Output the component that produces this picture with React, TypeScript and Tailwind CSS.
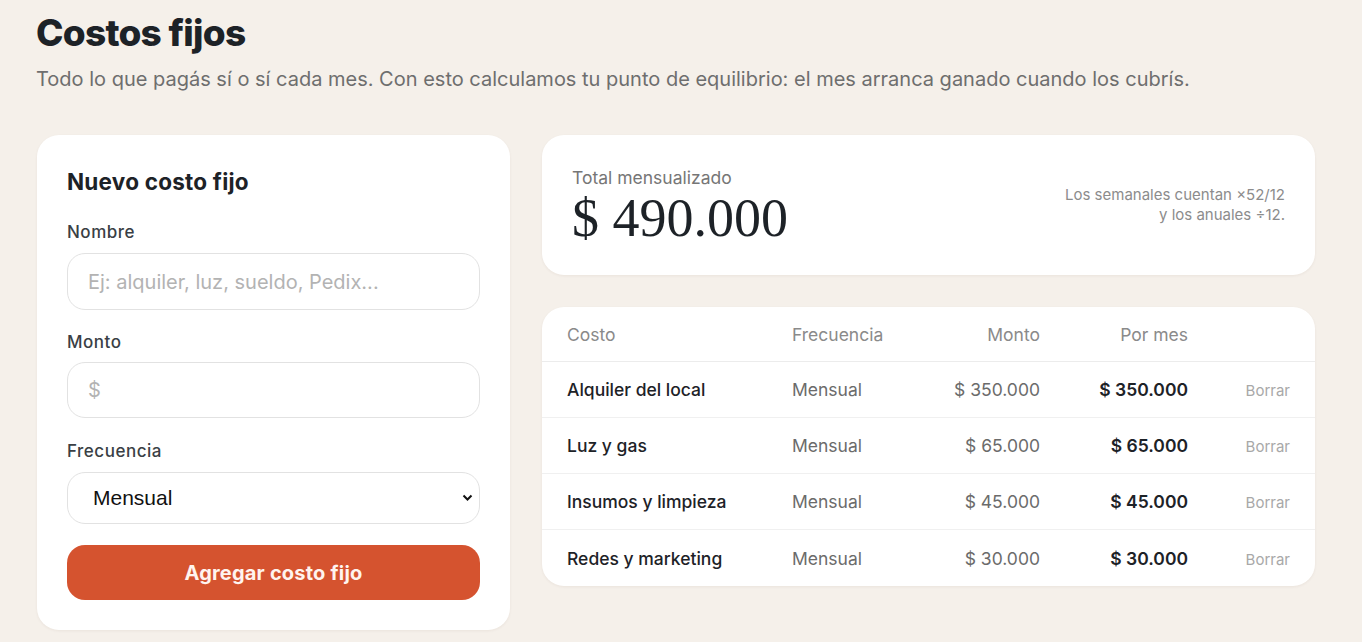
import React from 'react';

interface Cost {
  name: string;
  freq: string;
  amount: string;
  monthly: string;
}

const costs: Cost[] = [
  { name: 'Alquiler del local', freq: 'Mensual', amount: '$ 350.000', monthly: '$ 350.000' },
  { name: 'Luz y gas', freq: 'Mensual', amount: '$ 65.000', monthly: '$ 65.000' },
  { name: 'Insumos y limpieza', freq: 'Mensual', amount: '$ 45.000', monthly: '$ 45.000' },
  { name: 'Redes y marketing', freq: 'Mensual', amount: '$ 30.000', monthly: '$ 30.000' },
];

const cols = 'grid grid-cols-[225px_130px_118px_148px_1fr] items-center px-[25px]';

export default function App() {
  return (
    <main className="min-h-screen bg-[#f5f0ea] px-9 pt-[9px] pb-10 font-['Inter',sans-serif] text-[#1f2328]">
      <h1 className="text-[37px] leading-[48px] font-extrabold tracking-[-0.02em] text-[#1d2227]">Costos fijos</h1>
      <p className="mt-[8px] text-[20px] leading-[28px] text-[#6e6e6e]">
        Todo lo que pagás sí o sí cada mes. Con esto calculamos tu punto de equilibrio: el mes arranca ganado cuando los cubrís.
      </p>

      <div className="mt-[42px] ml-px grid w-[1278px] grid-cols-[473px_1fr] items-start gap-8">
        {/* Form */}
        <section className="rounded-[22px] bg-white p-[30px] shadow-[0_1px_3px_rgba(60,40,20,0.06)]">
          <h2 className="mt-[2px] text-[22.5px] leading-[30px] font-bold tracking-[0.01em] text-[#1d2227]">Nuevo costo fijo</h2>

          <label className="mt-[25px] block text-[17px] leading-[20px] font-medium tracking-[0.03em] text-[#3a3f45]">Nombre</label>
          <input
            className="mt-[11px] block h-[57px] w-full rounded-[18px] border border-[#e2e2e2] bg-white px-[20px] text-[20px] outline-none placeholder:text-[#b3b3b3]"
            placeholder="Ej: alquiler, luz, sueldo, Pedix..."
          />

          <label className="mt-[22px] block text-[17px] leading-[20px] font-medium tracking-[0.03em] text-[#3a3f45]">Monto</label>
          <input
            className="mt-[10px] block h-[56px] w-full rounded-[18px] border border-[#e2e2e2] bg-white px-[20px] text-[20px] outline-none placeholder:text-[#b3b3b3]"
            placeholder="$"
          />

          <label className="mt-[23px] block text-[17px] leading-[20px] font-medium tracking-[0.03em] text-[#3a3f45]">Frecuencia</label>
          <div className="relative mt-[11px]">
            <select className="block h-[52px] w-full appearance-none rounded-[18px] border border-[#e2e2e2] bg-white pl-[25px] font-['Liberation_Sans',sans-serif] text-[21px] text-[#111] outline-none">
              <option>Mensual</option>
              <option>Semanal</option>
              <option>Anual</option>
            </select>
            <svg className="pointer-events-none absolute right-[7px] top-[22px]" width="11" height="8" viewBox="0 0 11 8">
              <path d="M1.5 1.5 L5.5 5.5 L9.5 1.5" fill="none" stroke="#111" strokeWidth="2" />
            </svg>
          </div>

          <button className="mt-[21px] h-[55px] w-full rounded-[18px] bg-[#d5532f] text-[20px] font-bold tracking-[0.01em] text-[#fff4ef]">
            Agregar costo fijo
          </button>
        </section>

        <div className="flex flex-col gap-8">
          {/* Summary */}
          <section className="flex h-[140px] items-center justify-between rounded-[22px] bg-white px-[30px] shadow-[0_1px_3px_rgba(60,40,20,0.06)]">
            <div className="pt-[2px]">
              <div className="text-[17.5px] leading-[22px] text-[#767676]">Total mensualizado</div>
              <div className="mt-[1px] font-['Liberation_Serif',serif] text-[54px] leading-[56px] text-[#1d2227]">$ 490.000</div>
            </div>
            <div className="text-right text-[15px] leading-[20px] text-[#8c8c8c]">
              Los semanales cuentan ×52/12
              <br />
              y los anuales ÷12.
            </div>
          </section>

          {/* Table */}
          <section className="rounded-[22px] bg-white shadow-[0_1px_3px_rgba(60,40,20,0.06)]">
            <div className={`${cols} h-[55px] border-b border-[#ececec] pt-[3px] text-[17.5px] text-[#8a8a8a]`}>
              <div>Costo</div>
              <div>Frecuencia</div>
              <div className="text-right">Monto</div>
              <div className="text-right">Por mes</div>
              <div />
            </div>
            {costs.map((c, i) => (
              <div
                key={c.name}
                className={`${cols} h-[56px] pt-[2px] text-[17.5px] ${i < costs.length - 1 ? 'border-b border-[#f0f0f0]' : ''}`}
              >
                <div className="font-medium text-[#1d2227]">{c.name}</div>
                <div className="text-[#6b6b6b]">{c.freq}</div>
                <div className="text-right text-[#6b6b6b]">{c.amount}</div>
                <div className="text-right font-semibold text-[#1d2227]">{c.monthly}</div>
                <div className="pt-[2px] text-right text-[15px] text-[#a8a8a8]">Borrar</div>
              </div>
            ))}
          </section>
        </div>
      </div>
    </main>
  );
}
